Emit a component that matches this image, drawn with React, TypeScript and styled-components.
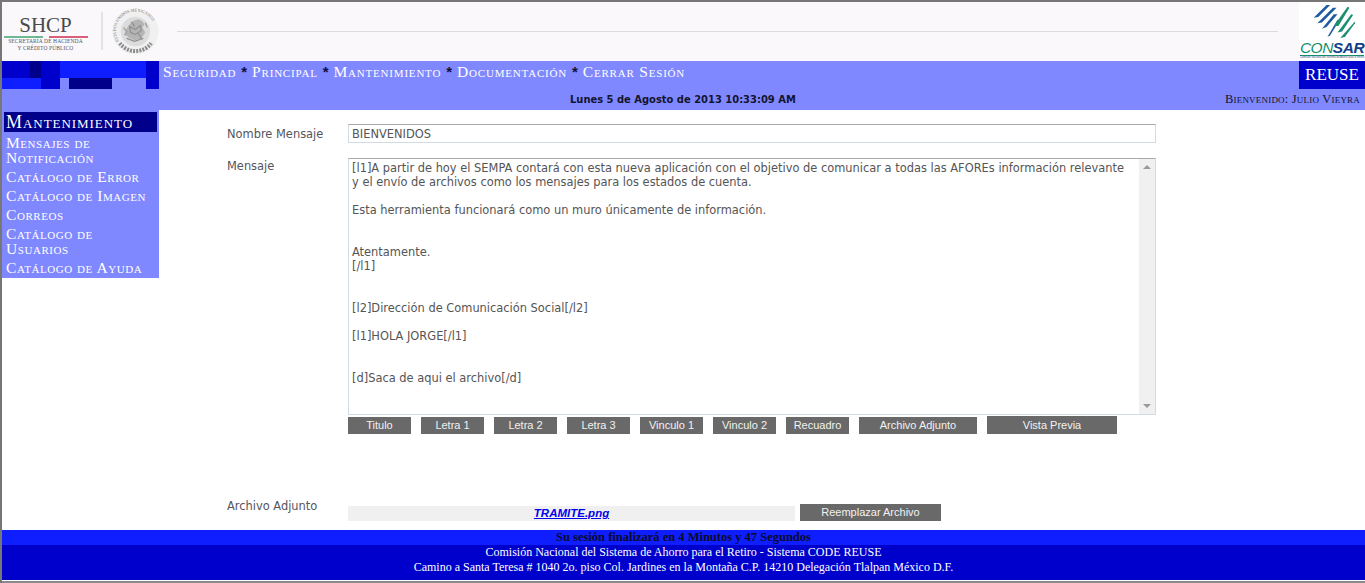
import React from "react";
import styled, { createGlobalStyle } from "styled-components";

const navLinks = ["Seguridad", "Principal", "Mantenimiento", "Documentación", "Cerrar Sesión"];

const menuItems = [
  "Mensajes de Notificación",
  "Catálogo de Error",
  "Catálogo de Imagen",
  "Correos",
  "Catálogo de Usuarios",
  "Catálogo de Ayuda",
];

const toolButtons = [
  { label: "Titulo", width: 63 },
  { label: "Letra 1", width: 63 },
  { label: "Letra 2", width: 63 },
  { label: "Letra 3", width: 63 },
  { label: "Vinculo 1", width: 63 },
  { label: "Vinculo 2", width: 63 },
  { label: "Recuadro", width: 63 },
  { label: "Archivo Adjunto", width: 118 },
  { label: "Vista Previa", width: 130, tall: true },
];

const mensaje = `[l1]A partir de hoy el SEMPA contará con esta nueva aplicación con el objetivo de comunicar a todas las AFOREs información relevante
y el envío de archivos como los mensajes para los estados de cuenta.

Esta herramienta funcionará como un muro únicamente de información.


Atentamente.
[/l1]


[l2]Dirección de Comunicación Social[/l2]

[l1]HOLA JORGE[/l1]


[d]Saca de aqui el archivo[/d]`;

const App = () => {
  return (
    <Page>
      <GlobalStyle />
      <Header>
        <ShcpLogo>
          <ShcpName>SHCP</ShcpName>
          <ShcpRule>
            <RuleColor $color="#6fb893" />
            <RuleColor $color="#d8607a" />
          </ShcpRule>
          <ShcpSub>
            SECRETARÍA DE HACIENDA
            <br />Y CRÉDITO PÚBLICO
          </ShcpSub>
        </ShcpLogo>
        <LogoDivider />
        <Seal />
        <HeaderLine />
        <ConsarLogo>
          <ConsarMark />
          <ConsarName>
            CON<b>SAR</b>
          </ConsarName>
          <ConsarSub>Comisión Nacional del Sistema de Ahorro para el Retiro</ConsarSub>
        </ConsarLogo>
      </Header>

      <NavBand>
        <NavTop>
          <Mosaic />
          <NavLinks>
            {navLinks.map((link, i) => (
              <React.Fragment key={link}>
                {i > 0 && <NavSep>*</NavSep>}
                <NavLink>{link}</NavLink>
              </React.Fragment>
            ))}
          </NavLinks>
          <SystemBox>Reuse</SystemBox>
        </NavTop>
        <NavBottom>
          <DateText>Lunes 5 de Agosto de 2013 10:33:09 AM</DateText>
          <Welcome>Bienvenido: Julio Vieyra</Welcome>
        </NavBottom>
      </NavBand>

      <Body>
        <Sidebar>
          <SideTitle>Mantenimiento</SideTitle>
          {menuItems.map((item) => (
            <SideItem key={item}>{item}</SideItem>
          ))}
        </Sidebar>

        <Form>
          <Row>
            <Label>Nombre Mensaje</Label>
            <TextInput>BIENVENIDOS</TextInput>
          </Row>
          <MessageRow>
            <Label>Mensaje</Label>
            <MessageColumn>
              <MessageBox>
                <MessageText>{mensaje}</MessageText>
                <ScrollTrack>
                  <ArrowUp />
                  <ArrowDown />
                </ScrollTrack>
              </MessageBox>
              <ToolBar>
                {toolButtons.map((b) => (
                  <ToolButton key={b.label} $width={b.width} $tall={b.tall}>
                    {b.label}
                  </ToolButton>
                ))}
              </ToolBar>
            </MessageColumn>
          </MessageRow>
          <AttachRow>
            <Label>Archivo Adjunto</Label>
            <AttachName>
              <AttachLink href="#">TRAMITE.png</AttachLink>
            </AttachName>
            <ToolButton $width={141}>Reemplazar Archivo</ToolButton>
          </AttachRow>
        </Form>
      </Body>

      <SessionBar>Su sesión finalizará en 4 Minutos y 47 Segundos</SessionBar>
      <Footer>
        <div>Comisión Nacional del Sistema de Ahorro para el Retiro - Sistema CODE REUSE</div>
        <div>Camino a Santa Teresa # 1040 2o. piso Col. Jardines en la Montaña C.P. 14210 Delegación Tlalpan México D.F.</div>
      </Footer>
      <BottomEdge />
    </Page>
  );
};

export default App;

const Seal = () => (
  <SealSvg viewBox="0 0 48 48">
    <defs>
      <path id="sealArc" d="M7 34 A20 20 0 1 1 41 34" />
    </defs>
    <circle cx="24" cy="24" r="23.5" fill="#f1f0f1" />
    <circle cx="24" cy="24" r="15" fill="#dcdcdc" />
    <path d="M14 24c2-6 6-11 11-12 4-1 7 2 8 5l-2 3 3 5-4 6-7 2-6-3-3-3z" fill="#b4b4b4" />
    <path d="M18 19l6 3 5-4 1 5-6 4-5-2zM15 31l8 3 9-3M20 14l3 5M27 26l3 5" fill="none" stroke="#8f8f8f" strokeWidth="1.2" />
    <path d="M12 20l3 4-2 4M34 15l2 5" fill="none" stroke="#a0a0a0" strokeWidth="1.5" />
    <text fontFamily="'Liberation Serif', serif" fontSize="4.3" fill="#7c7c7c">
      <textPath href="#sealArc">ESTADOS UNIDOS MEXICANOS</textPath>
    </text>
    <path d="M8 36A20 20 0 0 0 40 36" fill="none" stroke="#8a8a8a" strokeWidth="4" strokeDasharray="2 1.2" />
  </SealSvg>
);

const ConsarMark = () => (
  <MarkSvg viewBox="0 0 50 36">
    <g fill="#1f5aa0">
      <path d="M5 14 L19 0 L23 0 L10 13 Z" />
      <path d="M9 20 L26 3 L30 3 L14 19 Z" />
      <path d="M14 26 L27 10 L31 10 L19 24 Z" />
      <path d="M20 35 L31 16 L33 17 L23 33 Z" />
    </g>
    <g fill="#1b8f70">
      <path d="M27 23 L42 2 L44 3 L32 23 Z" />
      <path d="M31 30 L46 10 L48 11 L36 29 Z" />
      <path d="M34 36 L50 18 L50 20 L39 35 Z" />
    </g>
  </MarkSvg>
);

const Mosaic = () => (
  <MosaicSvg viewBox="0 0 157 28" shapeRendering="crispEdges">
    <rect width="157" height="28" fill="#7f88ff" />
    <rect x="0" y="0" width="28" height="17" fill="#0000cd" />
    <rect x="28" y="0" width="11" height="17" fill="#00008b" />
    <rect x="39" y="0" width="19" height="28" fill="#0000cd" />
    <rect x="58" y="0" width="86" height="17" fill="#0f1eff" />
    <rect x="144" y="0" width="13" height="28" fill="#0000cd" />
    <rect x="0" y="17" width="39" height="11" fill="#0f1eff" />
    <rect x="67" y="17" width="43" height="11" fill="#00008b" />
  </MosaicSvg>
);

const GlobalStyle = createGlobalStyle`
  html, body {
    margin: 0;
    padding: 0;
    background: #fff;
    overflow: hidden;
  }
`;

const Page = styled.div`
  width: 1365px;
  height: 583px;
  box-sizing: border-box;
  border-top: 2px solid #777;
  border-left: 2px solid #777;
  display: flex;
  flex-direction: column;
  overflow: hidden;
`;

const Header = styled.div`
  height: 59px;
  flex: none;
  display: flex;
  background: #faf8fa;
`;

const ShcpLogo = styled.div`
  width: 87px;
  flex: none;
  display: flex;
  flex-direction: column;
  align-items: center;
  padding-top: 14px;
  box-sizing: border-box;
`;

const ShcpName = styled.div`
  font-family: "Liberation Serif", serif;
  font-size: 21px;
  line-height: 19px;
  color: #4a4a4c;
`;

const ShcpRule = styled.div`
  display: flex;
  gap: 6px;
  margin-top: 1px;
`;

const RuleColor = styled.div<{ $color: string }>`
  width: 39px;
  height: 2px;
  background: ${(p) => p.$color};
`;

const ShcpSub = styled.div`
  font-family: "Liberation Serif", serif;
  font-size: 5.5px;
  line-height: 7px;
  letter-spacing: 0.12px;
  white-space: nowrap;
  text-align: center;
  color: #55555a;
`;

const LogoDivider = styled.div`
  width: 2px;
  height: 38px;
  margin: 10px 0 0 12px;
  background: #e4e3e4;
`;

const SealSvg = styled.svg`
  width: 47px;
  height: 47px;
  margin: 6px 0 0 9px;
  flex: none;
`;

const HeaderLine = styled.div`
  flex: 1;
  height: 1px;
  margin: 29px 21px 0 18px;
  background: #dcdcdc;
`;

const ConsarLogo = styled.div`
  width: 66px;
  flex: none;
  background: #fff;
  display: flex;
  flex-direction: column;
  align-items: center;
`;

const MarkSvg = styled.svg`
  width: 46px;
  height: 33px;
  margin-top: 3px;
  flex: none;
`;

const ConsarName = styled.div`
  font-family: "Liberation Sans", sans-serif;
  font-size: 15.5px;
  line-height: 15px;
  font-style: italic;
  letter-spacing: -0.5px;
  color: #15906f;
  margin-top: 2px;

  b {
    color: #123f8c;
    font-weight: 700;
  }
`;

const ConsarSub = styled.div`
  font-family: "Liberation Sans", sans-serif;
  font-size: 2.6px;
  line-height: 4px;
  white-space: nowrap;
  color: #2c4f7e;
  border-top: 1px solid #15906f;
`;

const NavBand = styled.div`
  height: 49px;
  flex: none;
  display: flex;
  flex-direction: column;
  background: #7f88ff;
`;

const NavTop = styled.div`
  height: 28px;
  display: flex;
`;

const MosaicSvg = styled.svg`
  width: 157px;
  height: 28px;
  flex: none;
`;

const NavLinks = styled.div`
  flex: 1;
  display: flex;
  align-items: baseline;
  padding: 2px 0 0 4px;
  gap: 5px;
`;

const NavLink = styled.span`
  font-family: "Liberation Serif", serif;
  font-variant: small-caps;
  font-size: 15.5px;
  letter-spacing: 0.8px;
  color: #fff;
`;

const NavSep = styled.span`
  font-family: "Liberation Sans", sans-serif;
  font-weight: 700;
  font-size: 15px;
  color: #10103a;
`;

const SystemBox = styled.div`
  width: 66px;
  flex: none;
  background: #0000cd;
  color: #fff;
  font-family: "Liberation Serif", serif;
  font-size: 17px;
  line-height: 28px;
  text-align: center;
  text-transform: uppercase;
`;

const NavBottom = styled.div`
  flex: 1;
  display: flex;
  align-items: center;
  justify-content: space-between;
  padding-left: 568px;
  padding-right: 5px;
`;

const DateText = styled.div`
  font-family: "DejaVu Sans", Verdana, sans-serif;
  font-weight: 700;
  font-size: 9.95px;
  color: #14142e;
`;

const Welcome = styled.div`
  font-family: "Liberation Serif", serif;
  font-variant: small-caps;
  font-size: 12.5px;
  letter-spacing: 0.2px;
  color: #14142e;
`;

const Body = styled.div`
  height: 420px;
  flex: none;
  display: flex;
  align-items: flex-start;
`;

const Sidebar = styled.div`
  width: 157px;
  height: 168px;
  flex: none;
  box-sizing: border-box;
  padding: 2px 2px 0;
  background: #7f88ff;
  font-family: "Liberation Serif", serif;
  font-variant: small-caps;
  color: #fff;
`;

const SideTitle = styled.div`
  height: 20px;
  line-height: 20px;
  padding-left: 2px;
  margin-bottom: 1px;
  font-size: 18px;
  letter-spacing: 0.95px;
  background: #00008b;
`;

const SideItem = styled.div`
  padding: 2px;
  width: 144px;
  font-size: 15.5px;
  line-height: 15px;
  letter-spacing: 0.55px;
`;

const Form = styled.div`
  flex: 1;
  display: flex;
  flex-direction: column;
  padding: 14px 0 0 68px;
  font-family: "DejaVu Sans", Verdana, sans-serif;
  font-size: 11.43px;
  color: #555;
`;

const Row = styled.div`
  display: flex;
  align-items: center;
`;

const Label = styled.div`
  width: 121px;
  flex: none;
  color: #555560;
`;

const TextInput = styled.div`
  width: 808px;
  height: 19px;
  box-sizing: border-box;
  border: 1px solid #d3dbe2;
  border-top-color: #a9a9a9;
  padding-left: 3px;
  line-height: 18px;
`;

const MessageRow = styled.div`
  display: flex;
  align-items: flex-start;
  margin-top: 15px;

  ${Label} {
    padding-top: 1px;
  }
`;

const MessageColumn = styled.div`
  display: flex;
  flex-direction: column;
`;

const MessageBox = styled.div`
  width: 808px;
  height: 257px;
  box-sizing: border-box;
  border: 1px solid #d3dbe2;
  border-top-color: #a9a9a9;
  display: flex;
`;

const MessageText = styled.div`
  flex: 1;
  padding: 2px 0 0 3px;
  line-height: 14px;
  white-space: pre-wrap;
`;

const ScrollTrack = styled.div`
  width: 16px;
  flex: none;
  background: #f0f0f0;
  display: flex;
  flex-direction: column;
  align-items: center;
  justify-content: space-between;
  padding: 6px 0;
  box-sizing: border-box;
`;

const ArrowUp = styled.div`
  width: 0;
  height: 0;
  border-left: 4px solid transparent;
  border-right: 4px solid transparent;
  border-bottom: 4px solid #9a9a9a;
`;

const ArrowDown = styled(ArrowUp)`
  border-bottom: 0;
  border-top: 4px solid #9a9a9a;
`;

const ToolBar = styled.div`
  display: flex;
  align-items: flex-end;
  gap: 10px;
  height: 19px;
`;

const ToolButton = styled.div<{ $width: number; $tall?: boolean }>`
  width: ${(p) => p.$width}px;
  height: ${(p) => (p.$tall ? 18 : 17)}px;
  flex: none;
  background: #696969;
  color: #f2f2f2;
  font-family: "Liberation Sans", Arial, sans-serif;
  font-size: 11px;
  line-height: ${(p) => (p.$tall ? 18 : 17)}px;
  text-align: center;
`;

const AttachRow = styled.div`
  display: flex;
  align-items: flex-end;
  margin-top: 70px;

  ${Label} {
    align-self: flex-start;
    margin-top: -5px;
  }
`;

const AttachName = styled.div`
  width: 447px;
  height: 15px;
  margin-right: 5px;
  background: #f0f0f0;
  text-align: center;
  line-height: 15px;
`;

const AttachLink = styled.a`
  font-family: "Liberation Sans", Arial, sans-serif;
  font-size: 11.5px;
  font-weight: 700;
  font-style: italic;
  color: #0000ee;
`;

const SessionBar = styled.div`
  height: 15px;
  flex: none;
  background: #0f1eff;
  color: #0a0a2a;
  font-family: "Liberation Serif", serif;
  font-weight: 700;
  font-size: 12.5px;
  line-height: 15px;
  text-align: center;
`;

const Footer = styled.div`
  height: 35px;
  flex: none;
  background: #0000cd;
  color: #fff;
  font-family: "Liberation Serif", serif;
  font-size: 12px;
  line-height: 15px;
  text-align: center;
`;

const BottomEdge = styled.div`
  flex: none;
  height: 2px;
  margin-top: 1px;
  background: #8a8a8a;
`;
